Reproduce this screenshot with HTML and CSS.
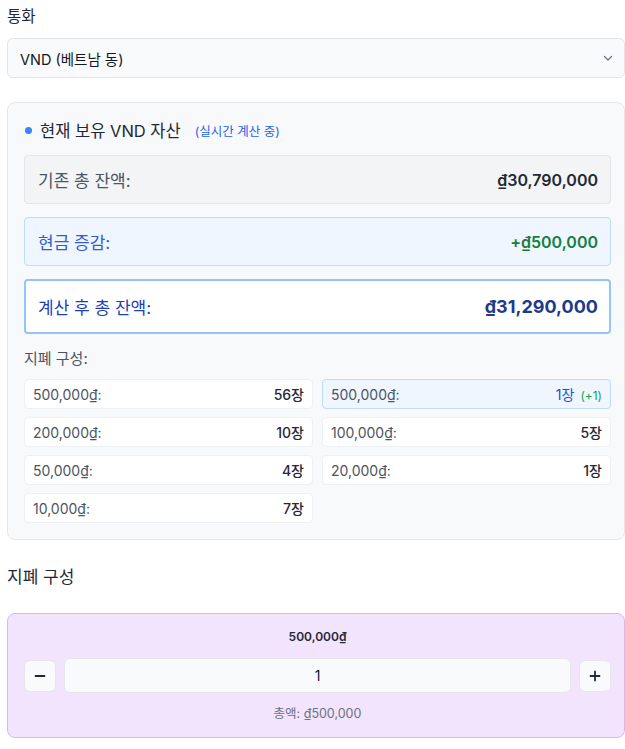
FILE: index.html
```html
<!DOCTYPE html>
<html lang="ko">
<head>
<meta charset="utf-8">
<title>통화</title>
<link rel="stylesheet" href="styles.css">
</head>
<body>
<div class="page">
  <div class="field-label">통화</div>
  <div class="select">
    <span>VND (베트남 동)</span>
    <svg class="chev" width="12" height="12" viewBox="0 0 12 12"><path d="M2.5 4.5 L6 8 L9.5 4.5" fill="none" stroke="#6b7280" stroke-width="1.2" stroke-linecap="round" stroke-linejoin="round"/></svg>
  </div>

  <section class="panel">
    <div class="panel-title">
      <span class="dot"></span>
      <span class="title-text">현재 보유 VND 자산</span>
      <span class="live">(실시간 계산 중)</span>
    </div>
    <div class="box box-base">
      <span class="box-label">기존 총 잔액:</span>
      <span class="box-value">₫30,790,000</span>
    </div>
    <div class="box box-change">
      <span class="box-label">현금 증감:</span>
      <span class="box-value">+₫500,000</span>
    </div>
    <div class="box box-total">
      <span class="box-label">계산 후 총 잔액:</span>
      <span class="box-value">₫31,290,000</span>
    </div>
    <div class="sub-label">지폐 구성:</div>
    <div class="notes">
      <div class="note"><span class="note-k">500,000₫:</span><span class="note-v">56장</span></div>
      <div class="note note-hl"><span class="note-k">500,000₫:</span><span class="note-v"><span class="hl-v">1장</span><span class="delta">(+1)</span></span></div>
      <div class="note"><span class="note-k">200,000₫:</span><span class="note-v">10장</span></div>
      <div class="note"><span class="note-k">100,000₫:</span><span class="note-v">5장</span></div>
      <div class="note"><span class="note-k">50,000₫:</span><span class="note-v">4장</span></div>
      <div class="note"><span class="note-k">20,000₫:</span><span class="note-v">1장</span></div>
      <div class="note"><span class="note-k">10,000₫:</span><span class="note-v">7장</span></div>
    </div>
  </section>

  <h2 class="heading">지폐 구성</h2>

  <section class="card">
    <div class="card-title">500,000₫</div>
    <div class="stepper">
      <button class="step-btn" type="button">
        <svg width="14" height="14" viewBox="0 0 14 14"><path d="M2.5 7 H11.5" stroke="#1f2937" stroke-width="1.8" stroke-linecap="round"/></svg>
      </button>
      <div class="qty">1</div>
      <button class="step-btn" type="button">
        <svg width="14" height="14" viewBox="0 0 14 14"><path d="M2.5 7 H11.5 M7 2.5 V11.5" stroke="#1f2937" stroke-width="1.8" stroke-linecap="round"/></svg>
      </button>
    </div>
    <div class="card-total">총액: ₫500,000</div>
  </section>
</div>
</body>
</html>
```

FILE: styles.css
```css
*, *::before, *::after { box-sizing: border-box; }
html, body {
  margin: 0;
  padding: 0;
  background: #ffffff;
  overflow-x: hidden;
}
body {
  font-family: Inter, "Noto Sans CJK KR", "Noto Sans", sans-serif;
  color: #1f2937;
}
.page {
  width: 618px;
  margin-left: 7px;
}
.field-label {
  font-size: 15.5px;
  line-height: 20px;
  padding-top: 7px;
  margin-bottom: 11px;
  color: #1f2937;
}
.select {
  height: 40px;
  border: 1px solid #e2e5ea;
  border-radius: 6px;
  background: #f9fafb;
  display: flex;
  align-items: center;
  justify-content: space-between;
  padding: 0 10px 0 12px;
  font-size: 14.5px;
  color: #111827;
}
.chev { display: block; }

.panel {
  margin-top: 24px;
  background: #f8f9fb;
  border: 1px solid #e5e7eb;
  border-radius: 8px;
  padding: 16px 13px 16px 16px;
}
.panel-title {
  display: flex;
  align-items: center;
  height: 22px;
  margin-bottom: 14px;
}
.dot {
  width: 7px;
  height: 7px;
  border-radius: 50%;
  background: #3b82f6;
  margin: 0 8px 0 1px;
}
.title-text {
  font-size: 16.5px;
  color: #1f2937;
}
.live {
  font-size: 12.5px;
  color: #2563eb;
  margin-left: 14px;
}
.box {
  display: flex;
  align-items: center;
  justify-content: space-between;
  border-radius: 4px;
  padding: 0 12px 0 13px;
  margin-bottom: 13px;
}
.box-label { font-size: 17px; }
.box-base {
  height: 49px;
  background: #f3f4f6;
  border: 1px solid #e3e5e9;
}
.box-base .box-label { color: #4b5563; }
.box-base .box-value { color: #1f2937; font-size: 16px; font-weight: 600; }
.box-change {
  height: 49px;
  background: #eff6ff;
  border: 1px solid #bfdbfe;
}
.box-change .box-label { color: #2f5bd3; }
.box-change .box-value { color: #15803d; font-size: 16px; font-weight: 600; }
.box-total {
  height: 55px;
  background: #ffffff;
  border: 2px solid #93c5fd;
  padding: 0 11px 0 12px;
  margin-bottom: 15px;
}
.box-total .box-label { color: #1e40af; }
.box-total .box-value { color: #1e3a8a; font-size: 18px; font-weight: 700; }

.sub-label {
  font-size: 15px;
  line-height: 20px;
  color: #4b5563;
  margin-bottom: 10px;
}
.notes {
  display: grid;
  grid-template-columns: 1fr 1fr;
  column-gap: 9px;
  row-gap: 8px;
}
.note {
  height: 30px;
  background: #ffffff;
  border: 1px solid #eef0f3;
  border-radius: 4px;
  display: flex;
  align-items: center;
  justify-content: space-between;
  padding: 0 8px;
  font-size: 14px;
}
.note-k { color: #4b5563; }
.note-v { color: #1f2937; font-weight: 500; }
.note-hl {
  background: #eff6ff;
  border-color: #bfdbfe;
}
.hl-v { color: #1d4ed8; font-weight: 400; }
.delta { color: #16a34a; font-size: 12px; margin-left: 6px; font-weight: 400; }

.heading {
  font-size: 17px;
  font-weight: 400;
  color: #1f2937;
  margin: 26px 0 25px 0;
  line-height: 22px;
}
.card {
  background: #f3e4fd;
  border: 1px solid #d8b4fe;
  border-radius: 8px;
  padding: 14px 13px 14px 16px;
}
.card-title {
  text-align: center;
  font-size: 12px;
  font-weight: 600;
  color: #1f2937;
  line-height: 18px;
  margin-bottom: 12px;
}
.stepper {
  display: flex;
  align-items: center;
  gap: 8px;
  height: 35px;
}
.step-btn {
  width: 32px;
  height: 32px;
  border: 1px solid #e5e7eb;
  border-radius: 6px;
  background: #f9fafb;
  display: flex;
  align-items: center;
  justify-content: center;
  padding: 0;
}
.qty {
  flex: 1;
  height: 35px;
  border: 1px solid #e5e7eb;
  border-radius: 6px;
  background: #f9fafb;
  display: flex;
  align-items: center;
  justify-content: center;
  font-size: 14px;
  color: #111827;
}
.card-total {
  text-align: center;
  font-size: 12.5px;
  color: #6b7280;
  margin-top: 12px;
  line-height: 18px;
}
```
